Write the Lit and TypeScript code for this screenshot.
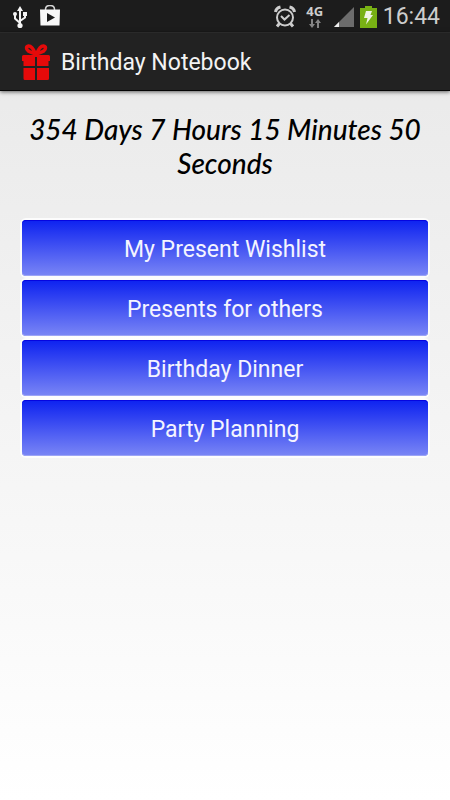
import { LitElement, html, css } from "lit";
import { customElement, state } from "lit/decorators.js";

@customElement("app-root")
export class AppRoot extends LitElement {
  @state() private items = [
    "My Present Wishlist",
    "Presents for others",
    "Birthday Dinner",
    "Party Planning",
  ];

  static styles = css`
    :host {
      display: flex;
      flex-direction: column;
      min-height: 100vh;
      font-family: Roboto, "Noto Sans", sans-serif;
      background: linear-gradient(#e8e8e8, #ffffff);
    }
    .status {
      display: flex;
      align-items: center;
      justify-content: space-between;
      box-sizing: border-box;
      height: 32px;
      padding: 1px 10px 0 12px;
      background: #1c1c1c;
      color: #cdcdcd;
    }
    .group {
      display: flex;
      align-items: center;
    }
    .left {
      gap: 12px;
    }
    .right {
      gap: 6px;
    }
    .network {
      display: flex;
      flex-direction: column;
      align-items: center;
      gap: 2px;
      width: 26px;
      font: bold 13px/12px "Noto Sans", sans-serif;
    }
    .clock {
      font-size: 23px;
      line-height: 30px;
    }
    .bar {
      display: flex;
      align-items: center;
      gap: 11px;
      box-sizing: border-box;
      height: 59px;
      padding: 2px 22px 0;
      background: #222222;
      border-top: 1px solid #2a2a2a;
      border-bottom: 1px solid #050505;
      box-shadow: 0 1px 4px #00000099;
    }
    svg {
      display: block;
      flex: none;
    }
    h1 {
      margin: 0;
      color: #f3f3f3;
      font-size: 23px;
      font-weight: 400;
      line-height: 32px;
    }
    main {
      padding: 21px 22px;
    }
    .countdown {
      margin: 0 0 40px;
      color: #000000;
      font: italic 500 28px/34px Lato, sans-serif;
      text-align: center;
    }
    .menu {
      display: flex;
      flex-direction: column;
      gap: 4px;
    }
    .item {
      height: 56px;
      padding: 3px 0 0;
      border: 0;
      border-radius: 4px;
      background: linear-gradient(#0d22f0, #7a86f5);
      box-shadow:
        0 0 0 2px #ffffffcc,
        inset 0 1px #0505e0,
        inset 0 -1px #9ca4f5;
      color: #f4f4ff;
      font: 23px/32px Roboto, sans-serif;
    }
  `;

  private usb() {
    return html`<svg width="16" height="24" viewBox="0 0 16 24" fill="none" stroke="#f4f4f4" stroke-width="2" aria-hidden="true">
      <path d="M8 5V21M3 9v4.500l5 4.500M13 9v3.500L8 16" />
      <g fill="#f4f4f4" stroke="none">
        <path d="M8 1l3 5H5zM11 7h4v4h-4z" />
        <circle cx="3" cy="9" r="2" />
        <circle cx="8" cy="20.500" r="2.600" />
      </g>
    </svg>`;
  }

  private shop() {
    return html`<svg width="20" height="24" viewBox="0 0 20 24" aria-hidden="true">
      <path d="M5.500 6V4.500c0-2.500 2-4 4.500-4s4.500 1.500 4.500 4V6" fill="none" stroke="#d6d6d6" stroke-width="1.500" />
      <path d="M0 4.500h20l-.5 16H.5z" fill="#f8f8f8" />
      <path d="M7 8v9l8-4.500z" fill="#1c1c1c" />
    </svg>`;
  }

  private alarm() {
    return html`<svg width="22" height="24" viewBox="0 0 22 24" fill="none" stroke="#cdcdcd" stroke-width="2" aria-hidden="true">
      <circle cx="11" cy="12.500" r="8" />
      <path d="M7 11l3.500 3.500 5-4.500" />
      <path d="M5.500 18.500l-2.500 3M16.500 18.500l2.500 3M1.500 7Q2 3 6.500 2M20.500 7Q20 3 15.500 2" stroke-width="3" />
    </svg>`;
  }

  private gift() {
    return html`<svg width="28" height="38" viewBox="0 0 28 38" fill="#e60a0a" aria-hidden="true">
      <path d="M0 12.500Q0 11 1.500 11H13v11H1.500V17H0zM15 11h11.500Q28 11 28 12.500V17h-1.500v5H15zM1.500 24H13v12H3Q1.500 36 1.500 34.500zM15 24h12v10.500Q27 36 25.500 36H15z" />
      <path d="M13.500 10C11.500 5 9 1.800 6.500 2 3.800 2.300 4 5.500 6.300 7c2 1.300 4.700 2 7.200 3zM14.500 10C16.500 5 19 1.800 21.500 2c2.700.3 2.500 3.500.2 5-2 1.300-4.700 2-7.200 3z" fill="none" stroke="#e60a0a" stroke-width="3.500" />
    </svg>`;
  }

  render() {
    return html`
      <div class="status">
        <div class="group left">${this.usb()}${this.shop()}</div>
        <div class="group right">
          ${this.alarm()}
          <span class="network">
            4G
            <svg width="12" height="9" viewBox="0 0 12 9" fill="#858585" aria-hidden="true">
              <path d="M2 0h2v5h2L3 9 0 5h2zM8 9h2V4h2L9 0 6 4h2z" />
            </svg>
          </span>
          <svg width="20" height="22" viewBox="0 0 20 22" aria-hidden="true">
            <path d="M20 1v20H0z" fill="#6c6c6c" />
            <path d="M5 16v5H0z" fill="#f0f0f0" />
          </svg>
          <svg width="17" height="24" viewBox="0 0 17 24" aria-hidden="true">
            <path d="M5 1h7v2h5v20H0V3h5z" fill="#78b114" />
            <path d="M6 6h6l-1.500 4H13l-7 9.500 1.500-6.500H4z" fill="#eef4e4" />
          </svg>
          <span class="clock">16:44</span>
        </div>
      </div>
      <header class="bar">
        ${this.gift()}
        <h1>Birthday Notebook</h1>
      </header>
      <main>
        <p class="countdown">354 Days 7 Hours 15 Minutes 50 Seconds</p>
        <nav class="menu">
          ${this.items.map((item) => html`<button class="item" type="button">${item}</button>`)}
        </nav>
      </main>
    `;
  }
}
